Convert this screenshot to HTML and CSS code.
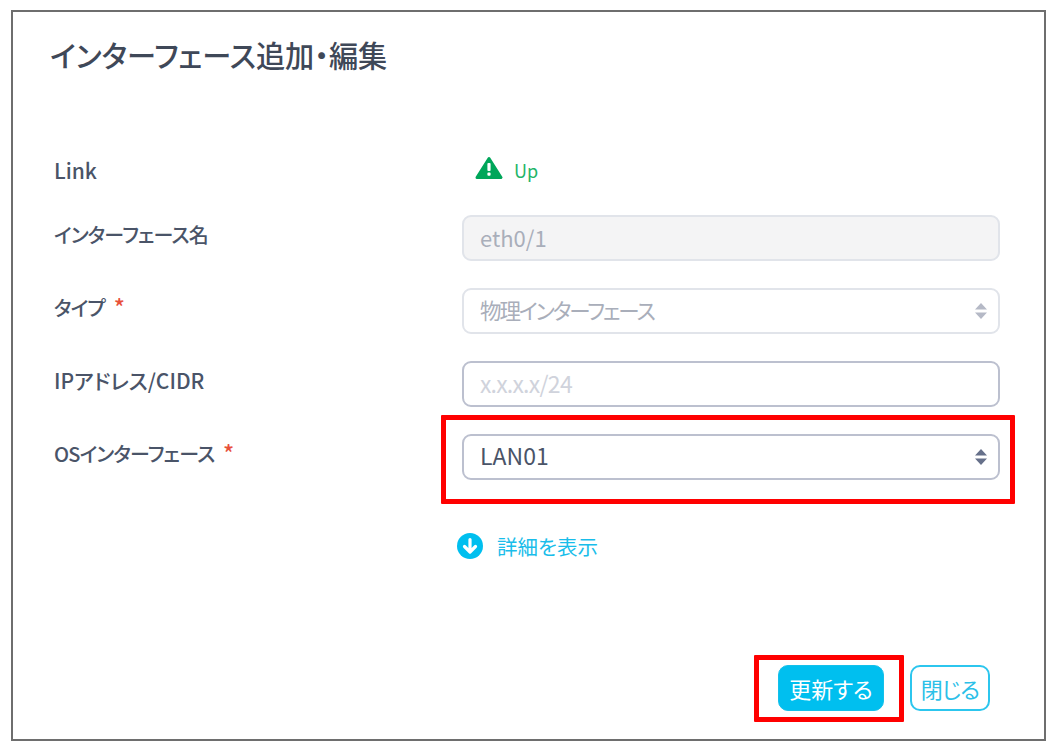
FILE: index.html
```html
<!DOCTYPE html>
<html lang="ja">
<head>
<meta charset="utf-8">
<title>インターフェース追加・編集</title>
<link rel="stylesheet" href="styles.css">
</head>
<body>
<main class="frame">
  <h1 class="title">インターフェース追加・編集</h1>
  <div class="form">
    <div class="label link-label">Link</div>
    <div class="status">
      <svg class="warn" width="28" height="24" viewBox="0 0 28 24"><path fill="#00a65a" stroke="#00a65a" stroke-width="3" stroke-linejoin="round" d="M14 2.500 L26 21.500 H2 Z"/><rect x="12.400" y="7" width="3.200" height="8" rx="1" fill="#fff"/><rect x="12.400" y="16.500" width="3.200" height="3.200" rx="1" fill="#fff"/></svg>
      <span class="up">Up</span>
    </div>

    <div class="label label-cjk">インターフェース名</div>
    <div class="control"><input class="field is-disabled" value="eth0/1" disabled></div>

    <div class="label label-cjk">タイプ <span class="req">*</span></div>
    <div class="control">
      <div class="field is-muted">物理インターフェース</div>
      <svg class="updown" width="14" height="18" viewBox="0 0 14 18"><path fill="#b5b9c6" d="M7 1 L13 7.500 H1 Z M7 17 L1 10.500 H13 Z"/></svg>
    </div>

    <div class="label">IPアドレス/CIDR</div>
    <div class="control"><input class="field is-strong" placeholder="x.x.x.x/24"></div>

    <div class="label label-cjk">OSインターフェース <span class="req">*</span></div>
    <div class="control">
      <div class="field is-strong">LAN01</div>
      <svg class="updown" width="14" height="18" viewBox="0 0 14 18"><path fill="#66708a" d="M7 1 L13 7.500 H1 Z M7 17 L1 10.500 H13 Z"/></svg>
      <span class="mark mark-select"></span>
    </div>

    <div></div>
    <a class="more" href="#">
      <svg width="26" height="26" viewBox="0 0 26 26"><circle cx="13" cy="13" r="13" fill="#00bfef"/><path fill="none" stroke="#fff" stroke-width="3.200" stroke-linecap="round" stroke-linejoin="round" d="M13 6.500 V18.500 M7.500 13.500 L13 19 L18.500 13.500"/></svg>
      <span>詳細を表示</span>
    </a>
  </div>
  <div class="actions">
    <div class="primary-wrap">
      <button class="btn btn-primary">更新する</button>
      <span class="mark mark-button"></span>
    </div>
    <button class="btn btn-outline">閉じる</button>
  </div>
</main>
</body>
</html>
```

FILE: styles.css
```css
* { box-sizing: border-box; }
html, body { margin: 0; padding: 0; background: #fff; }
body {
  font-family: "Noto Sans CJK JP", "Noto Sans", sans-serif;
  font-feature-settings: "palt";
  color: #4a5468;
}
.frame {
  width: 1035px;
  height: 731px;
  margin: 10px 0 0 11px;
  border: 2px solid #6e6e6e;
  padding: 20px 44px 0 37px;
  display: flex;
  flex-direction: column;
}
.title {
  margin: 0;
  font-size: 29.200px;
  line-height: 44px;
  font-weight: 500;
  color: #3f4858;
}
.form {
  margin-top: 66px;
  display: grid;
  grid-template-columns: 412px 538px;
  grid-auto-rows: 46px;
  row-gap: 27px;
}
.label {
  padding: 0 0 0 4px;
  margin-top: -2px;
  font-size: 21px;
  line-height: 42px;
  font-weight: 500;
  color: #4a5468;
  white-space: nowrap;
}
.label-cjk { font-size: 20px; letter-spacing: -0.8px; margin-top: -1px; }
.link-label { margin-top: 9px; line-height: 38px; }
.req { color: #e8503a; margin-left: 5px; font-size: 23px; line-height: 20px; }
.status {
  display: flex;
  align-items: flex-start;
  gap: 11px;
  margin-left: 13px;
  padding-top: 14px;
}
.up { font-size: 18px; line-height: 26px; margin-top: 1px; color: #1fb568; }
.control { position: relative; height: 46px; }
.field {
  display: block;
  width: 100%;
  height: 46px;
  border: 2px solid #e1e4ea;
  border-radius: 9px;
  padding: 0 16px 3px;
  font: inherit;
  font-feature-settings: "palt";
  font-size: 23px;
  line-height: 39px;
  background: #fff;
  color: #4a5468;
  outline: none;
}
.is-disabled { background: #f4f4f5; color: #a9aeba; font-size: 22px; }
.is-muted { color: #a9aeba; font-size: 21.500px; letter-spacing: -2.100px; }
.is-strong { border-color: #bcc0cf; }
.field::placeholder { color: #d0d3dc; opacity: 1; letter-spacing: -0.700px; }
.updown { position: absolute; right: 12px; top: 14px; }
.more {
  display: flex;
  align-items: center;
  gap: 14px;
  margin-left: -5px;
  height: 26px;
  margin-top: 26px;
  font-size: 20.500px;
  color: #19bdea;
  text-decoration: none;
}
.actions {
  margin-top: 112px;
  margin-left: 728px;
  display: flex;
  align-items: center;
  gap: 26px;
}
.primary-wrap { position: relative; height: 46px; }
.btn {
  display: block;
  height: 46px;
  border-radius: 10px;
  font: inherit;
  font-feature-settings: "palt";
  font-size: 22px;
  padding: 0;
}
.btn-primary {
  width: 106px;
  background: #00bfef;
  border: 1px solid #14c0ea;
  color: #fff;
}
.btn-outline {
  width: 80px;
  background: #fff;
  border: 2px solid #2cc6ee;
  color: #2cc0e8;
  letter-spacing: -0.800px;
}
.mark {
  position: absolute;
  border: 5px solid #ff0000;
  border-radius: 1px;
  pointer-events: none;
}
.mark-select { left: -21px; top: -19px; width: 574px; height: 89px; }
.mark-button { left: -24px; top: -10px; width: 150px; height: 67px; }
```
